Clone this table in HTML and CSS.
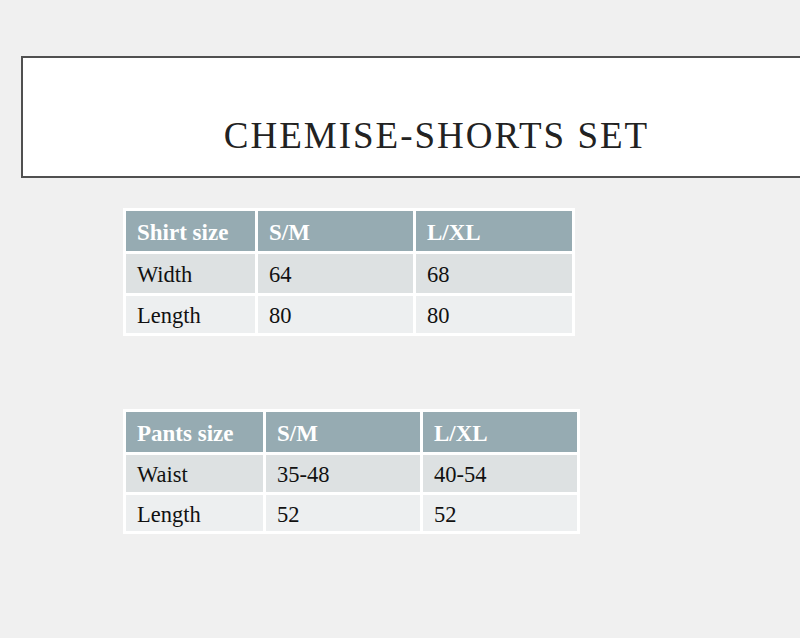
FILE: index.html
```html
<!DOCTYPE html>
<html>
<head>
<meta charset="utf-8">
<link rel="stylesheet" href="styles.css">
</head>
<body>
<div class="page">
  <header class="title-box">
    <h1 class="title">CHEMISE-SHORTS SET</h1>
  </header>
  <table class="size-table shirt">
    <colgroup><col class="c1"><col class="c2"><col class="c3"></colgroup>
    <thead>
      <tr class="head"><th>Shirt size</th><th>S/M</th><th>L/XL</th></tr>
    </thead>
    <tbody>
      <tr class="r1"><td>Width</td><td>64</td><td>68</td></tr>
      <tr class="r2"><td>Length</td><td>80</td><td>80</td></tr>
    </tbody>
  </table>
  <table class="size-table pants">
    <colgroup><col class="c1"><col class="c2"><col class="c3"></colgroup>
    <thead>
      <tr class="head"><th>Pants size</th><th>S/M</th><th>L/XL</th></tr>
    </thead>
    <tbody>
      <tr class="r1"><td>Waist</td><td>35-48</td><td>40-54</td></tr>
      <tr class="r2"><td>Length</td><td>52</td><td>52</td></tr>
    </tbody>
  </table>
</div>
</body>
</html>
```
FILE: styles.css
```css
html, body {
  margin: 0;
  padding: 0;
  background: #f0f0f0;
  overflow: hidden;
}
.page {
  width: 800px;
  height: 638px;
  padding-top: 56px;
  box-sizing: border-box;
  font-family: "Liberation Serif", "Times New Roman", serif;
}
.title-box {
  margin-left: 21px;
  width: 779px;
  height: 122px;
  border: 2px solid #505050;
  border-right: none;
  background: #ffffff;
  display: flex;
  align-items: flex-end;
  justify-content: center;
  padding: 0 0 22px 50px;
  box-sizing: border-box;
}
.title {
  margin: 0;
  font-weight: normal;
  font-size: 37px;
  line-height: 1;
  letter-spacing: 2px;
  color: #222;
}
.size-table {
  margin-left: 123px;
  border-collapse: separate;
  border-spacing: 3px;
  background: #ffffff;
  table-layout: fixed;
}
.size-table.shirt {
  margin-top: 30px;
}
.size-table.pants {
  margin-top: 73px;
}
.size-table th,
.size-table td {
  text-align: left;
  vertical-align: middle;
  padding: 3px 0 0 11px;
  font-size: 22.5px;
  line-height: 26px;
  color: #111;
}
.size-table th {
  font-size: 23px;
  font-weight: bold;
  color: #ffffff;
  background: #96abb2;
  height: 37px;
}
.size-table .r1 td {
  background: #dde1e2;
  height: 36px;
}
.size-table .r2 td {
  background: #edeff0;
  height: 34px;
}
.shirt .c1 { width: 129px; }
.shirt .c2 { width: 155px; }
.shirt .c3 { width: 156px; }
.pants .c1 { width: 137px; }
.pants .c2 { width: 154px; }
.pants .c3 { width: 154px; }
.pants .r1 td { height: 34px; }
.pants .r2 td { height: 33px; }
```
